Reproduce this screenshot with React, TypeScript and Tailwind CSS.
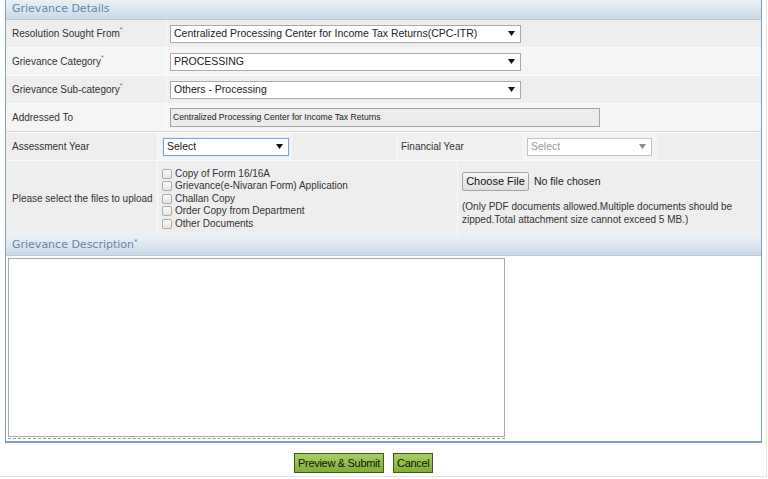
import React from 'react';

const Arrow = ({ muted = false }: { muted?: boolean }) => (
  <svg width="7" height="5" viewBox="0 0 7 5" className="shrink-0">
    <path d="M0 0h7L3.5 5z" fill={muted ? '#8a8a8a' : '#111'} />
  </svg>
);

const SelectBox = ({
  value,
  className = '',
  muted = false,
}: {
  value: string;
  className?: string;
  muted?: boolean;
}) => (
  <div
    className={`flex h-[18px] items-center justify-between bg-white pl-[3px] pr-[5px] text-[10.5px] ${
      muted ? 'border border-[#c2c2c2] text-[#9a9a9a]' : 'text-[#222]'
    } ${className}`}
  >
    <span className="truncate">{value}</span>
    <Arrow muted={muted} />
  </div>
);

const Req = () => <span className="relative -top-[3px] text-[7px] text-[#8a6a6a]">*</span>;

const SectionHeader = ({ title, req = false }: { title: string; req?: boolean }) => (
  <div className="flex h-[20px] items-center border-b border-[#b9c9d6] bg-gradient-to-b from-[#e9f0f6] via-[#dbe6ef] to-[#c8d9e7] pl-[6px] font-['DejaVu_Sans',sans-serif] text-[11px] text-[#6286ad]">
    {title}
    {req && <span className="relative -top-[3px] text-[7px] text-[#6286ad]">*</span>}
  </div>
);

const docs = [
  'Copy of Form 16/16A',
  'Grievance(e-Nivaran Form) Application',
  'Challan Copy',
  'Order Copy from Department',
  'Other Documents',
];

export default function App() {
  return (
    <div className="h-[479px] w-[768px] overflow-hidden bg-white font-['Liberation_Sans',Arial,sans-serif] text-[10px] text-[#333]">
      <div className="h-[477px] w-[767px] border-b border-r border-[#e4e4e4]">
        <div className="ml-[5px] w-[757px] border-x border-b-2 border-[#7c9ec8] bg-white">
          <SectionHeader title="Grievance Details" />

          {/* Resolution sought from */}
          <div className="flex h-[28px] border-b border-[#f8f8f8] bg-[#eeeeee]">
            <div className="flex w-[161px] items-center border-r border-[#f8f8f8] pl-[6px]">
              Resolution Sought From<Req />
            </div>
            <div className="flex items-center pl-[3px]">
              <SelectBox
                value="Centralized Processing Center for Income Tax Returns(CPC-ITR)"
                className="w-[351px] border border-[#a9a9a9]"
              />
            </div>
          </div>

          {/* Category */}
          <div className="flex h-[28px] border-b border-[#fbfbfb] bg-[#f5f5f5]">
            <div className="flex w-[161px] items-center border-r border-[#fbfbfb] pl-[6px]">
              Grievance Category<Req />
            </div>
            <div className="flex items-center pl-[3px]">
              <SelectBox value="PROCESSING" className="w-[351px] border border-[#a9a9a9]" />
            </div>
          </div>

          {/* Sub-category */}
          <div className="flex h-[28px] border-b border-[#f8f8f8] bg-[#eeeeee]">
            <div className="flex w-[161px] items-center border-r border-[#f8f8f8] pl-[6px]">
              Grievance Sub-category<Req />
            </div>
            <div className="flex items-center pl-[3px]">
              <SelectBox value="Others - Processing" className="w-[351px] border border-[#a9a9a9]" />
            </div>
          </div>

          {/* Addressed to */}
          <div className="flex h-[28px] border-b border-[#d9d9d9] bg-[#f5f5f5]">
            <div className="flex w-[161px] items-center border-r border-[#fbfbfb] pl-[6px]">
              Addressed To
            </div>
            <div className="flex items-center pl-[3px]">
              <div className="flex h-[19px] w-[430px] items-center border border-[#a4a4a4] bg-[#ececec] pl-[2px] text-[8.6px] font-medium text-[#222]">
                Centralized Processing Center for Income Tax Returns
              </div>
            </div>
          </div>

          {/* Assessment / financial year */}
          <div className="flex h-[29px] border-b border-t border-[#f9f9f9] bg-[#eeeeee]">
            <div className="flex w-[152px] items-center border-r border-[#f9f9f9] pl-[6px]">
              Assessment Year
            </div>
            <div className="flex w-[134px] items-center bg-[#f4f4f4] pl-[5px]">
              <SelectBox value="Select" className="w-[126px] border border-[#7fa6d6] shadow-[0_0_1px_#9cc0ea]" />
            </div>
            <div className="w-[104px]" />
            <div className="flex w-[126px] items-center border-l border-[#f9f9f9] bg-[#f0f0f0] pl-[4px]">
              Financial Year
            </div>
            <div className="flex w-[135px] items-center bg-[#f4f4f4] pl-[5px]">
              <SelectBox value="Select" muted className="w-[125px]" />
            </div>
          </div>

          {/* Files */}
          <div className="flex h-[75px] bg-[#eeeeee]">
            <div className="flex w-[152px] items-center whitespace-nowrap border-r border-[#f9f9f9] pl-[6px]">
              Please select the files to upload
            </div>
            <div className="flex w-[300px] flex-col justify-center border-r border-[#f9f9f9] pl-[4px] text-[10px]">
              {docs.map((d) => (
                <div key={d} className="flex h-[12.5px] items-center gap-[3px] leading-none">
                  <span className="h-[10px] w-[10px] rounded-[2px] border border-[#ababab] bg-gradient-to-b from-[#fbfbfb] to-[#e6e6e6]" />
                  <span>{d}</span>
                </div>
              ))}
            </div>
            <div className="flex flex-col pl-[4px] pt-[11px]">
              <div className="flex items-center gap-[5px]">
                <div className="flex h-[19px] w-[67px] items-center justify-center rounded-[2px] border border-[#a6a6a6] bg-gradient-to-b from-[#f7f7f7] to-[#dedede] text-[11px] text-[#111]">
                  Choose File
                </div>
                <span className="text-[10.5px] text-[#222]">No file chosen</span>
              </div>
              <div className="mt-[10px] leading-[12.5px]">
                (Only PDF documents allowed.Multiple documents should be
                <br />
                zipped.Total attachment size cannot exceed 5 MB.)
              </div>
            </div>
          </div>

          <SectionHeader title="Grievance Description" req />

          <div className="h-[185px] pl-[2px] pt-[2px]">
            <div className="h-[179px] w-[497px] border border-[#a9a9a9] bg-white" />
            <div className="mt-[1px] w-[497px] border-t border-dashed border-[#9a9a9a]" />
          </div>
        </div>

        <div className="flex gap-[9px] pl-[294px] pt-[10px]">
          <div className="flex h-[20px] items-center border border-[#3e5a1f] bg-gradient-to-b from-[#a8d05e] to-[#7fae38] px-[3px] text-[11px] tracking-[-0.3px] text-[#111]">
            Preview &amp; Submit
          </div>
          <div className="flex h-[20px] items-center border border-[#3e5a1f] bg-gradient-to-b from-[#a8d05e] to-[#7fae38] px-[3px] text-[11px] tracking-[-0.3px] text-[#111]">
            Cancel
          </div>
        </div>
      </div>
    </div>
  );
}
